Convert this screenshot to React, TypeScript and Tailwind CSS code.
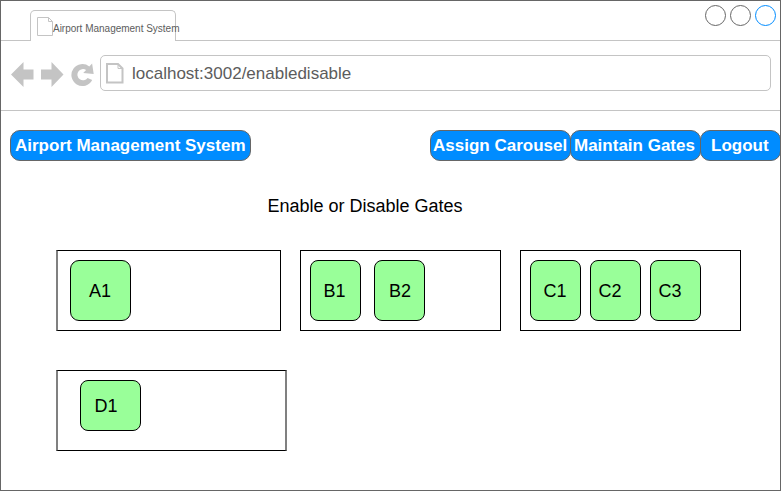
import React from "react";

function NavButton({ label, className, textClass }: { label: string; className: string; textClass: string }) {
  return (
    <button
      className={`h-[31px] shrink-0 rounded-[10px] border border-[#666666] bg-[#008cff] text-left text-[17px] leading-[28px] font-bold whitespace-nowrap text-white ${className}`}
    >
      <span className={`block ${textClass}`}>{label}</span>
    </button>
  );
}

function Gate({ label, className }: { label: string; className: string }) {
  return (
    <div className={`shrink-0 border border-black bg-[#99ff99] text-[18px] whitespace-nowrap text-black ${className}`}>
      {label}
    </div>
  );
}

function TabStrip() {
  return (
    <div className="flex h-10 items-end">
      <div className="h-px w-[29px] bg-[#c4c4c4]" />
      <div className="flex h-[31px] w-[146px] rounded-t-[5px] border border-b-0 border-[#c4c4c4] pt-[6px] pl-[6px]">
        <svg className="shrink-0" width="16" height="19" viewBox="0 0 16 19" fill="none" stroke="#c4c4c4">
          <path d="M.5 .5H11.5L15.5 4.5V18.5H.5ZM11.5 .5V4.5H15.5" />
        </svg>
        <span className="-mt-px text-[10px] leading-[25px] tracking-[-0.01px] whitespace-nowrap text-[#5c5c5c]">
          Airport Management System
        </span>
      </div>
      <div className="flex h-10 flex-1 items-start justify-end gap-1 border-b border-[#c4c4c4] pt-1 pr-[4px]">
        <div className="h-[21px] w-[21px] rounded-full border border-[#666666]" />
        <div className="h-[21px] w-[21px] rounded-full border border-[#666666]" />
        <div className="h-[21px] w-[21px] rounded-full border border-[#008cff]" />
      </div>
    </div>
  );
}

function AddressBar() {
  return (
    <div className="flex h-[70px] border-b border-[#c4c4c4] pt-[14px] pl-[10px]">
      <svg className="mt-[6px] shrink-0" width="89" height="28" viewBox="0 0 89 28" fill="#c4c4c4">
        <path d="M0 13.5L12.5 1V8.5H22.5V18.5H12.5V26Z" />
        <path d="M52.5 13.5L40.5 1V8.5H30V18.5H40.5V26Z" />
        <path d="M78.3 5.5L81.1 2.6L82.7 13.1L72.2 12L75.1 9A5.6 5.6 0 1 0 76.6 16.9L81.2 19.1A11 11 0 1 1 78.3 5.5Z" />
      </svg>
      <div className="flex h-[36px] w-[671px] rounded-[5px] border border-[#c4c4c4] pt-[7px] pl-[5px]">
        <svg className="shrink-0" width="18" height="21" viewBox="0 0 18 21" fill="none" stroke="#c4c4c4" strokeWidth="2">
          <path d="M1 1H12L16.5 5.5V19.5H1Z" />
          <path d="M12 1V5.5H16.5" strokeWidth="1" />
        </svg>
        <span className="ml-[8px] text-[17px] leading-[21px] whitespace-nowrap text-[#5c5c5c]">
          localhost:3002/enabledisable
        </span>
      </div>
    </div>
  );
}

export default function App() {
  return (
    <main
      className="h-[491px] w-[781px] overflow-hidden border border-[#666666] bg-white"
      style={{ fontFamily: '"Liberation Sans", Arial, sans-serif' }}
    >
      <TabStrip />
      <AddressBar />
      <nav className="mt-[19px] -mr-px flex pl-[9px]">
        <NavButton label="Airport Management System" className="w-[241px]" textClass="pl-[4px]" />
        <div className="ml-auto flex">
          <NavButton label="Assign Carousel" className="w-[141px]" textClass="pl-[2px]" />
          <NavButton label="Maintain Gates" className="-ml-px w-[131px]" textClass="pl-[3px]" />
          <NavButton label="Logout" className="-ml-px w-[81px]" textClass="pl-[10px]" />
        </div>
      </nav>
      <h1 className="mt-[31px] h-[28px] pl-[266.5px] text-[18px] leading-[28px] text-black">Enable or Disable Gates</h1>
      <div className="mt-[30px] flex pl-[55px]">
        <section className="flex h-[81px] w-[225px] border border-l-2 border-black border-l-[#808080] pt-[9px] pl-[12px]">
          <Gate label="A1" className="h-[61px] w-[61px] rounded-[9px] pl-[18px] leading-[60px]" />
        </section>
        <section className="ml-[19px] flex h-[81px] w-[201px] gap-[13px] border border-black pt-[9px] pl-[9px]">
          <Gate label="B1" className="h-[61px] w-[51px] rounded-[8px] pl-[12.5px] leading-[60px]" />
          <Gate label="B2" className="h-[61px] w-[51px] rounded-[8px] pl-[14px] leading-[60px]" />
        </section>
        <section className="ml-[19px] flex h-[81px] w-[221px] gap-[9px] border border-black pt-[9px] pl-[9px]">
          <Gate label="C1" className="h-[61px] w-[51px] rounded-[8px] pl-[12.5px] leading-[60px]" />
          <Gate label="C2" className="h-[61px] w-[51px] rounded-[8px] pl-[7.5px] leading-[60px]" />
          <Gate label="C3" className="h-[61px] w-[51px] rounded-[8px] pl-[7.5px] leading-[60px]" />
        </section>
      </div>
      <section className="mt-[39px] ml-[55px] flex h-[81px] w-[231px] border border-x-2 border-black border-x-[#808080] pt-[9px] pl-[22px]">
        <Gate label="D1" className="h-[51px] w-[61px] rounded-[8px] pl-[13.5px] leading-[50px]" />
      </section>
    </main>
  );
}
